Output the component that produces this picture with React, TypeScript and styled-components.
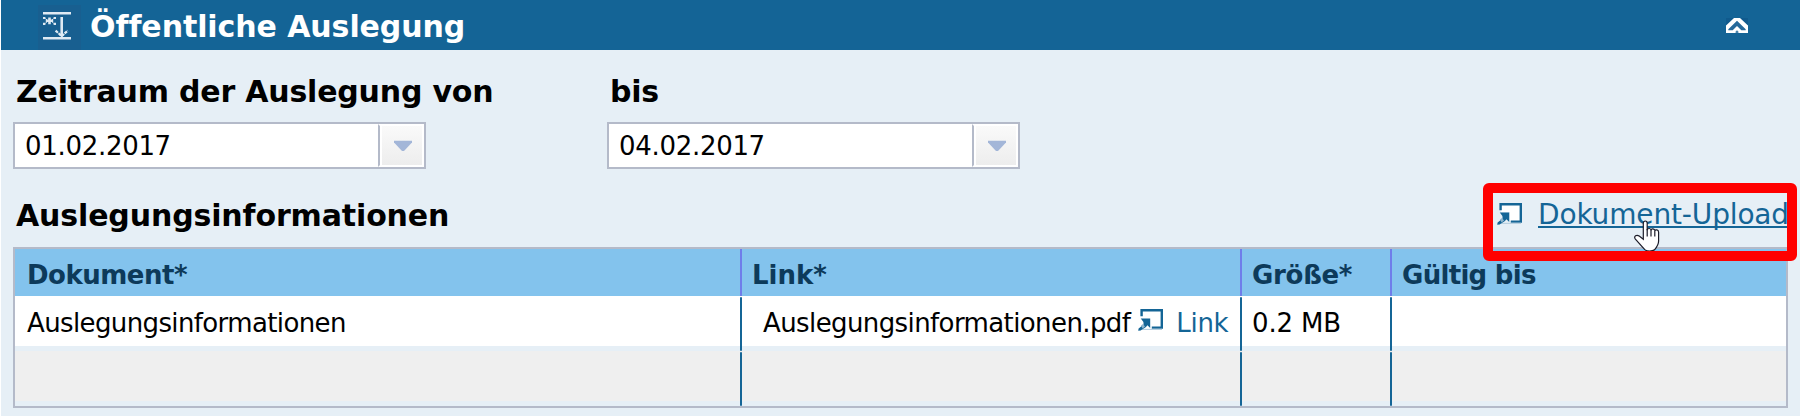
import React from 'react';
import styled, { createGlobalStyle } from 'styled-components';

const GlobalStyle = createGlobalStyle`
  * { box-sizing: border-box; }
  body {
    margin: 0;
    background: #fff;
    font-family: Verdana, 'DejaVu Sans', sans-serif;
    color: #000;
    overflow: hidden;
  }
`;

const Panel = styled.section`
  position: relative;
  height: 416px;
  margin-left: 1px;
  background: #e6eff6;
`;

const TitleBar = styled.header`
  display: flex;
  align-items: center;
  height: 50px;
  padding: 0 52px 0 37px;
  background: #146496;
`;

const TitleIconBox = styled.span`
  display: flex;
  align-self: flex-end;
  width: 43px;
  height: 45px;
  padding: 6px 0 0 4px;
  background: #185f90;
`;

const Title = styled.h1`
  flex: 1;
  margin: 0;
  padding: 3px 0 0 9px;
  font-size: 30px;
  line-height: 40px;
  letter-spacing: -0.08px;
  color: #fff;
`;

const Body = styled.div`
  padding: 22px 12px 0;
`;

const Fields = styled.div`
  display: flex;
  gap: 181px;
`;

const Field = styled.div`
  width: 413px;
`;

const Label = styled.div<{ $ls?: number }>`
  padding-left: 3px;
  font-size: 30px;
  font-weight: bold;
  line-height: 39px;
  letter-spacing: ${p => p.$ls ?? -0.2}px;
  white-space: nowrap;
`;

const DateBox = styled.div`
  display: flex;
  height: 47px;
  margin-top: 11px;
  border: 2px solid #b4bac9;
  background: #fff;
`;

const DateValue = styled.span`
  flex: 1;
  padding: 1px 0 0 10px;
  font-size: 26px;
  line-height: 43px;
  letter-spacing: -0.3px;
`;

const DropButton = styled.button`
  display: flex;
  align-items: center;
  justify-content: center;
  width: 46px;
  padding: 0 0 0 3px;
  border: 2px solid #fff;
  border-left: 2px solid #b4bac9;
  box-shadow: inset 2px 0 #fff;
  background: linear-gradient(#fafafa, #ededed);
`;

const InfoHeading = styled.div`
  display: flex;
  justify-content: space-between;
  height: 51px;
  margin-top: 27px;
`;

const UploadLink = styled.a`
  display: flex;
  align-items: flex-start;
  gap: 16px;
  margin-right: -1px;
  padding-top: 7px;
  color: #146596;
`;

const UploadText = styled.span`
  margin-top: -8px;
  font-size: 28px;
  line-height: 39px;
  letter-spacing: -0.15px;
  text-decoration: underline;
  text-decoration-thickness: 2px;
  text-underline-offset: 2px;
  text-decoration-skip-ink: none;
  white-space: nowrap;
`;

const Table = styled.div`
  height: 161px;
  width: 1775px;
  border: 2px solid #b4bac9;
`;

const Row = styled.div<{ $kind: 'head' | 'plain' | 'empty' }>`
  display: grid;
  grid-template-columns: 727px 500px 150px 1fr;
  height: ${p => (p.$kind === 'head' ? 47 : 55)}px;
  background: ${p =>
    p.$kind === 'head'
      ? '#83c3ed'
      : `linear-gradient(${p.$kind === 'plain' ? '#fff' : '#efefef'} 50px, #e6eff6 50px)`};
`;

const Cell = styled.div<{ $head?: boolean; $pad?: number; $ls?: number }>`
  display: flex;
  justify-content: space-between;
  padding-left: ${p => p.$pad ?? 10}px;
  font-size: 26px;
  font-weight: ${p => (p.$head ? 'bold' : 'normal')};
  color: ${p => (p.$head ? '#0d3a5a' : '#000')};
  line-height: ${p => (p.$head ? 53 : 54)}px;
  letter-spacing: ${p => p.$ls ?? 0}px;
  white-space: nowrap;
`;

const Separator = styled.i<{ $head?: boolean }>`
  flex: none;
  width: 2px;
  height: ${p => (p.$head ? 47 : 54)}px;
  margin-top: ${p => (p.$head ? 0 : 1)}px;
  border-radius: ${p => (p.$head ? 0 : 1)}px;
  background: ${p => (p.$head ? '#6f7dea' : '#146596')};
`;

const FileLine = styled.span`
  display: flex;
  align-items: flex-start;

  svg { margin: 13px 13px 0 8px; }
`;

const FileLink = styled.a`
  color: #146596;
  letter-spacing: -0.3px;
`;

const Highlight = styled.div`
  position: absolute;
  left: 1482px;
  top: 183px;
  width: 314px;
  height: 78px;
  border: 10px solid #f00;
  border-radius: 6px;
`;

const Pointer = styled.svg`
  position: absolute;
  left: 1632px;
  top: 219px;
`;

const TitleIcon = () => (
  <svg width="30" height="30" viewBox="0 0 30 30" fill="none" stroke="#dfeaf3">
    <path d="M1 2.3H29M1 27.3H29" strokeWidth="2.6" />
    <path d="M19.7 6V24" strokeWidth="2.6" />
    <path d="M13.6 19.6L19.7 25L25.8 19.6" strokeWidth="2.2" strokeDasharray="3.2 .8" />
    <path d="M16.5 23.4H23L19.7 26.2Z" fill="#dfeaf3" stroke="none" />
    <path d="M3.8 9.8H11.2M7.5 6.5V13.3" strokeWidth="2.6" />
    <path d="M1 7H3.4M1 12.8H3.4M11.6 7H14M11.6 12.8H14" strokeWidth="2.2" />
    <path d="M3.4 7.6L5 9M3.4 12.2L5 10.8M11.6 7.6L10 9M11.6 12.2L10 10.8" strokeWidth="1" />
  </svg>
);

const CollapseIcon = () => (
  <svg width="22" height="15" viewBox="0 0 22 15">
    <path d="M0 0H22V7H0Z" fill="#105a8d" />
    <path d="M0 7.5L8 0H14L22 7.5V15H0Z" fill="#fff" />
    <path d="M2.3 11.2L11 2.7L19.7 11.2V12.3H15.3L11 8L6.7 12.3H2.3Z" fill="#26699a" />
    <path d="M9.6 15V13.4L11 12.3L12.4 13.4V15Z" fill="#4a83ab" />
  </svg>
);

const OpenIcon = () => (
  <svg width="25" height="22" viewBox="0 0 25 22">
    <path d="M4 2H23V18H13V9H4Z" fill="#fff" />
    <path d="M3.6 7.2V1.2H23.8V18.6H13.8" fill="none" stroke="#146596" strokeWidth="2.4" />
    <path d="M4 20.4H24" stroke="#b9d0e0" strokeWidth="1.2" />
    <path d="M2.8 9.6H12.2V19L9.4 16.3L8 18L2.6 21.6L.2 21.8L.6 19.6L5.6 15.6L5.4 13Z" fill="#146596" />
    <path d="M3 16.6L5 15L7 17.4L4.6 19.4Z" fill="#8fb5cd" />
  </svg>
);

const DownArrow = () => (
  <svg width="20" height="12" viewBox="0 0 20 12">
    <path d="M1 .8H19V2.4L11 11H9L1 2.4Z" fill="#a3b6d8" />
  </svg>
);

const HandPointer = () => (
  <Pointer width="28" height="32" viewBox="0 0 28 32">
    <path
      d="M10.3 20.3V4.3C10.3 1.2 14.2 1.2 14.2 4.3V11.2C14.4 8.8 18 9 18 11.3C18.3 9.3 21.7 9.5 21.8 11.8C22.3 10.2 25.6 10.4 25.6 13.3V22C25.6 26 23.5 28.5 21.5 30.8C19 32.4 14 32.4 11.8 30.6C8 26.5 5.3 23.5 2.4 20.2C.3 17.2 3.7 15.2 6.2 17.1Z"
      fill="#fff"
      stroke="#1b1b28"
      strokeWidth="1.2"
    />
    <path d="M14.2 10V17.5M18 11V17.5M21.8 12V17.5" stroke="#1b1b28" strokeWidth="1.2" />
  </Pointer>
);

const DateField = ({ label, value }: { label: string; value: string }) => (
  <Field>
    <Label>{label}</Label>
    <DateBox>
      <DateValue>{value}</DateValue>
      <DropButton><DownArrow /></DropButton>
    </DateBox>
  </Field>
);

export default function App() {
  return (
    <>
      <GlobalStyle />
      <Panel>
        <TitleBar>
          <TitleIconBox><TitleIcon /></TitleIconBox>
          <Title>Öffentliche Auslegung</Title>
          <CollapseIcon />
        </TitleBar>
        <Body>
          <Fields>
            <DateField label="Zeitraum der Auslegung von" value="01.02.2017" />
            <DateField label="bis" value="04.02.2017" />
          </Fields>
          <InfoHeading>
            <Label $ls={-0.14}>Auslegungsinformationen</Label>
            <UploadLink>
              <OpenIcon />
              <UploadText>Dokument-Upload</UploadText>
            </UploadLink>
          </InfoHeading>
          <Table>
            <Row $kind="head">
              <Cell $head $pad={12} $ls={-0.5}>Dokument*<Separator $head /></Cell>
              <Cell $head>Link*<Separator $head /></Cell>
              <Cell $head $ls={-0.3}>Größe*<Separator $head /></Cell>
              <Cell $head $ls={-0.7}>Gültig bis</Cell>
            </Row>
            <Row $kind="plain">
              <Cell $pad={12} $ls={-0.62}>Auslegungsinformationen<Separator /></Cell>
              <Cell $pad={21} $ls={-0.6}>
                <FileLine>
                  Auslegungsinformationen.pdf
                  <OpenIcon />
                  <FileLink>Link</FileLink>
                </FileLine>
                <Separator />
              </Cell>
              <Cell $ls={-0.15}>0.2 MB<Separator /></Cell>
              <Cell />
            </Row>
            <Row $kind="empty">
              <Cell><span /><Separator /></Cell>
              <Cell><span /><Separator /></Cell>
              <Cell><span /><Separator /></Cell>
              <Cell />
            </Row>
          </Table>
        </Body>
        <HandPointer />
        <Highlight />
      </Panel>
    </>
  );
}
